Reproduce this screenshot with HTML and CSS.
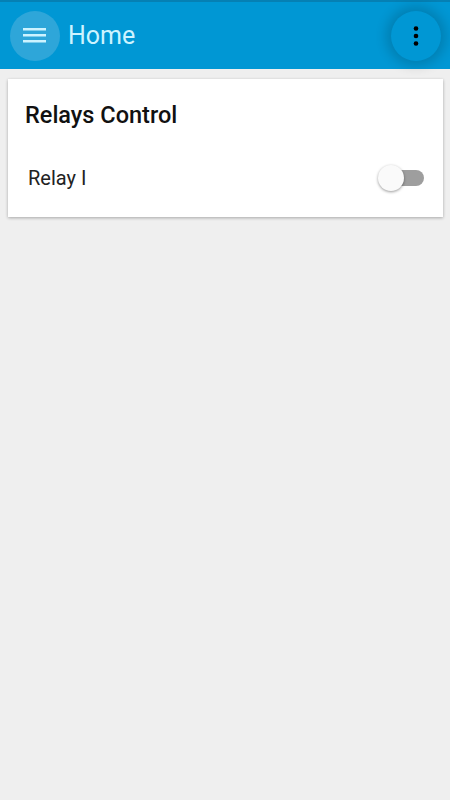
FILE: index.html
```html
<!DOCTYPE html>
<html lang="en">
<head>
    <meta charset="UTF-8">
    <meta name="viewport" content="width=device-width, initial-scale=1.0">
    <title>Home</title>
    <link rel="stylesheet" href="styles.css">
</head>
<body>
    <header class="toolbar">
        <div class="icon-btn menu-btn">
            <svg width="24" height="24" viewBox="0 0 24 24"><path d="M0 4h23v2.6H0zM0 10h23v2.6H0zM0 16h23v2.6H0z" fill="#cdf3ff"/></svg>
        </div>
        <h1 class="title">Home</h1>
        <div class="icon-btn more-btn">
            <svg width="24" height="24" viewBox="0 0 24 24"><circle cx="12" cy="4.5" r="2.3"/><circle cx="12" cy="12" r="2.3"/><circle cx="12" cy="19.5" r="2.3"/></svg>
        </div>
    </header>

    <main>
        <section class="card">
            <h2>Relays Control</h2>
            <div class="row">
                <span class="label">Relay I</span>
                <div class="switch">
                    <div class="track"></div>
                    <div class="thumb"></div>
                </div>
            </div>
        </section>
    </main>
</body>
</html>
```

FILE: styles.css
```css
/* Basic styling */
body {
    font-family: Roboto, 'Noto Sans', sans-serif;
    background-color: #efefef;
    margin: 0;
    padding: 0;
}

.toolbar {
    height: 69px;
    background-color: #0097d4;
    border-top: 2px solid #0580b4;
    display: flex;
    align-items: center;
    padding: 0 10px;
    box-sizing: border-box;
}

.icon-btn {
    width: 50px;
    height: 50px;
    border-radius: 50%;
    display: flex;
    align-items: center;
    justify-content: center;
}

.menu-btn {
    background-color: #2ea6d9;
}

.more-btn {
    margin-left: auto;
    margin-right: -1px;
    background-color: #0097d4;
    box-shadow: 0 0 12px 5px rgba(0,0,0,0.16);
}

.title {
    margin: 0 0 0 8px;
    font-size: 25px;
    font-weight: 400;
    color: #cdf3ff;
}

main {
    padding: 10px 7px 8px 8px;
}

.card {
    background: #fff;
    box-shadow: 0 1px 3px rgba(0,0,0,0.3);
    padding: 20px 17px 26px 17px;
}

.card h2 {
    margin: 0;
    font-size: 23.5px;
    font-weight: 500;
    color: #111;
    line-height: 32px;
}

.row {
    display: flex;
    align-items: center;
    justify-content: space-between;
    margin-top: 34px;
    padding: 0 2px 0 3px;
}

.label {
    font-size: 20px;
    color: #222;
}

.switch {
    position: relative;
    width: 46px;
    height: 26px;
}

.track {
    position: absolute;
    left: 2px;
    right: 0;
    top: 5px;
    height: 16px;
    border-radius: 8px;
    background: #9e9e9e;
}

.thumb {
    position: absolute;
    left: 0;
    top: 0;
    width: 26px;
    height: 26px;
    border-radius: 50%;
    background: #fafafa;
    box-shadow: 0 1px 3px rgba(0,0,0,0.4);
}
```
